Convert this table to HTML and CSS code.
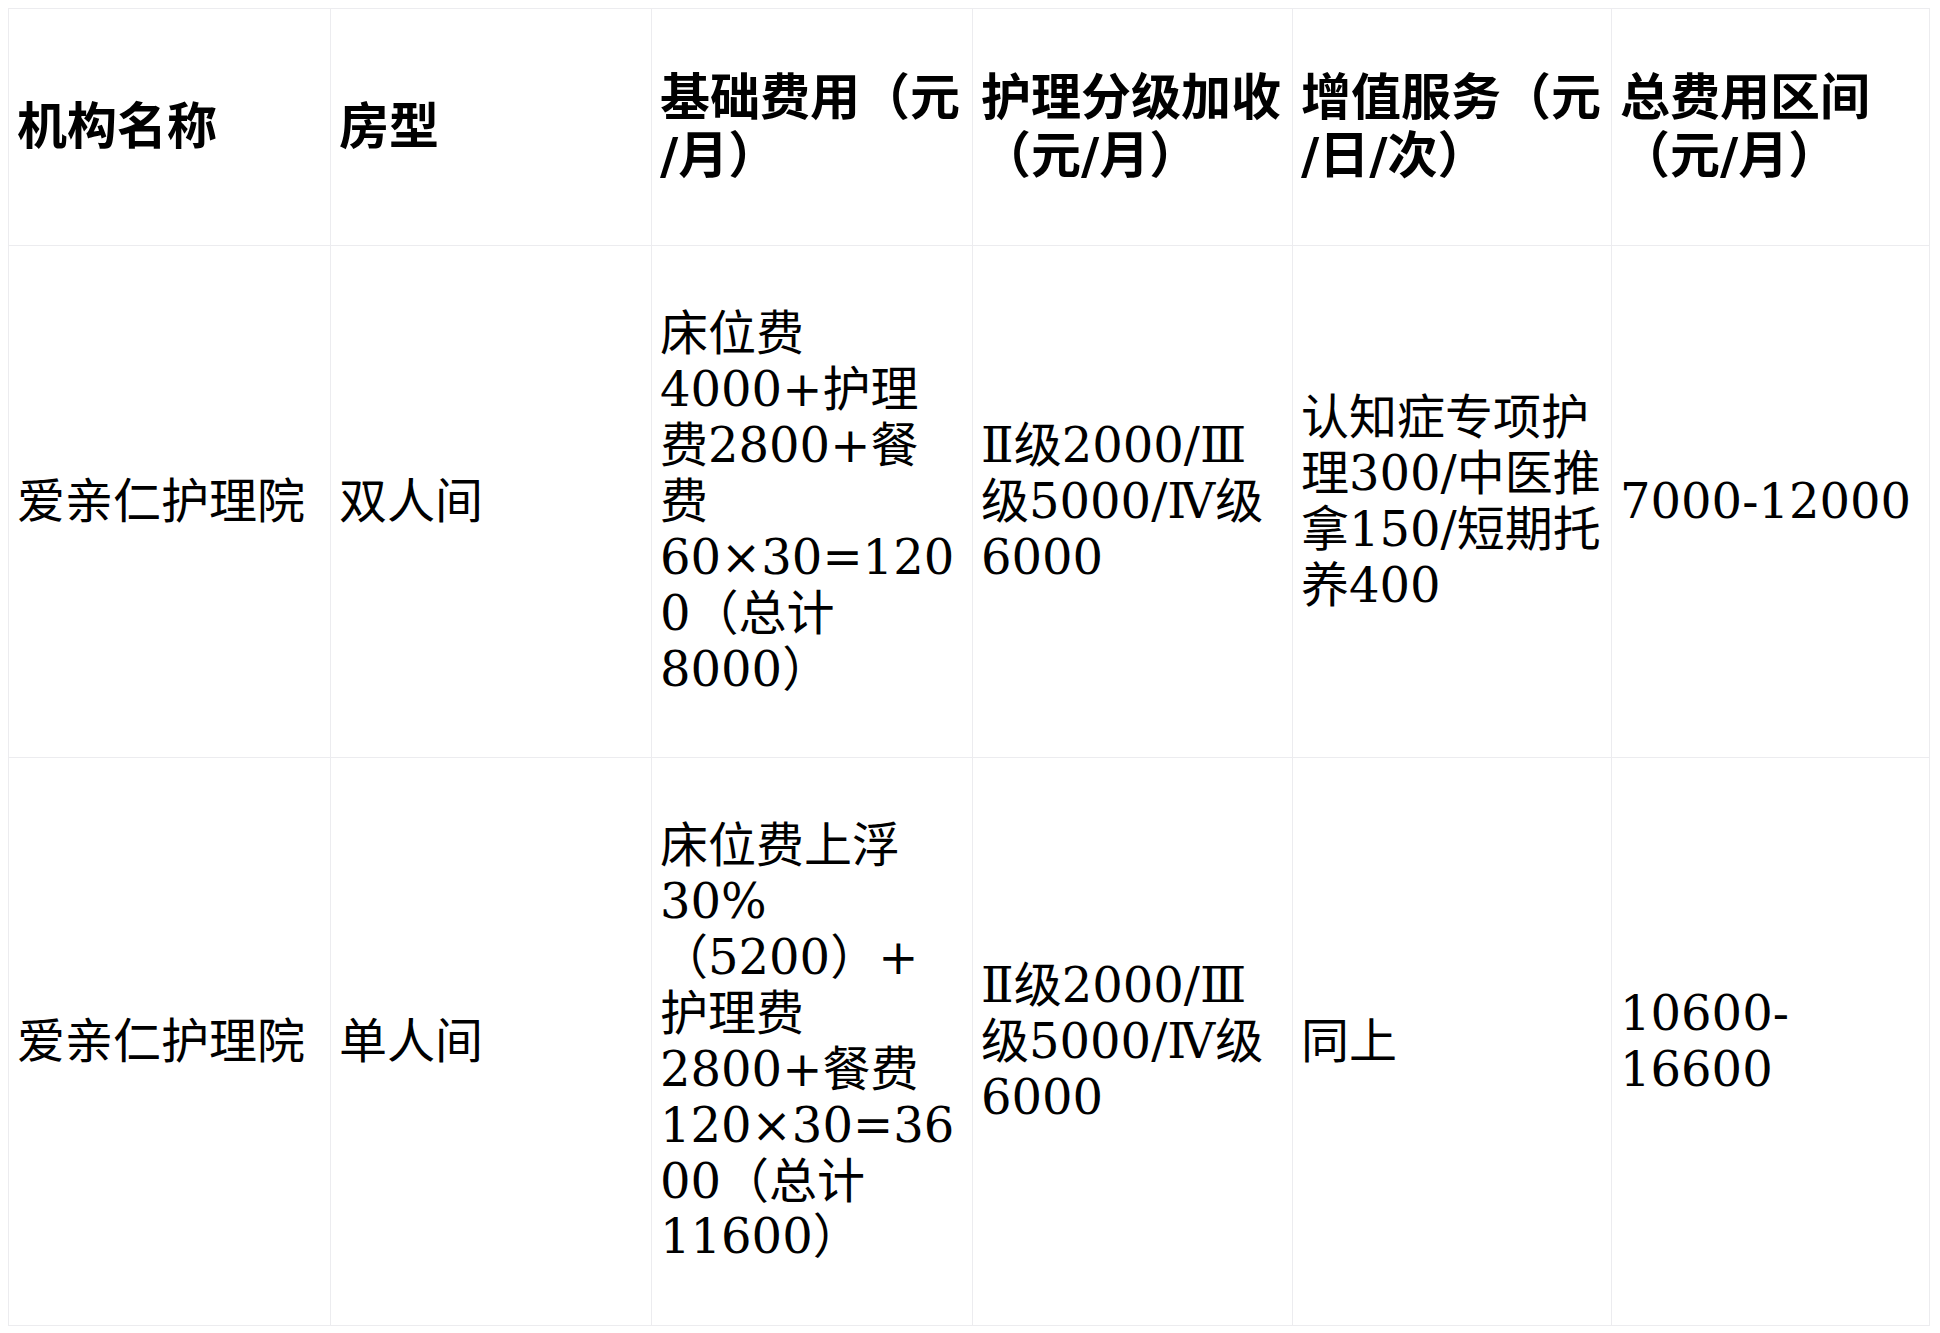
FILE: index.html
```html
<!DOCTYPE html>
<html lang="zh-CN">
<head>
<meta charset="utf-8">
<title>费用对比</title>
<link rel="stylesheet" href="styles.css">
</head>
<body>
<table class="fee-table">
  <colgroup>
    <col class="c1"><col class="c2"><col class="c3"><col class="c4"><col class="c5"><col class="c6">
  </colgroup>
  <thead>
    <tr>
      <th>机构名称</th>
      <th>房型</th>
      <th>基础费用（元<wbr>/月）</th>
      <th>护理分级加收（元<wbr>/月）</th>
      <th>增值服务（元<wbr>/日/次）</th>
      <th>总费用区间（元<wbr>/月）</th>
    </tr>
  </thead>
  <tbody>
    <tr>
      <td>爱亲仁护理院</td>
      <td>双人间</td>
      <td>床位费4000+护理费2800+餐费60×30=1200（总计8000）</td>
      <td>Ⅱ级2000/Ⅲ级5000/Ⅳ级6000</td>
      <td>认知症专项护理300/中医推拿150/短期托养400</td>
      <td>7000-12000</td>
    </tr>
    <tr>
      <td>爱亲仁护理院</td>
      <td>单人间</td>
      <td>床位费上浮30%<wbr>（5200）+<wbr>护理费2800+餐费120×30=3600（总计11600）</td>
      <td>Ⅱ级2000/Ⅲ级5000/Ⅳ级6000</td>
      <td>同上</td>
      <td>10600-16600</td>
    </tr>
  </tbody>
</table>
</body>
</html>
```
FILE: styles.css
```css
html, body {
  background: #ffffff;
}
body {
  margin: 8px;
  color: #000000;
  font-family: "DejaVu Serif", "Noto Sans CJK SC", serif;
}
.fee-table {
  border-collapse: collapse;
  table-layout: fixed;
  width: 1921px;
  border: 1px solid #e2e3e9;
  text-spacing-trim: space-all;
}
.c1 { width: 322px; }
.c2 { width: 321px; }
.c3 { width: 321px; }
.c4 { width: 320px; }
.c5 { width: 319px; }
.c6 { width: 318px; }
.fee-table th,
.fee-table td {
  border: 1px solid #ececef;
  padding: 60px 8px;
  text-align: left;
  vertical-align: middle;
  overflow-wrap: break-word;
  text-spacing-trim: space-all;
}
.fee-table th {
  font-family: "DejaVu Sans", "Noto Sans CJK SC", sans-serif;
  font-weight: 700;
  font-size: 50px;
  line-height: 1.164;
}
.fee-table thead tr {
  border-bottom: 1px solid #e2e3ec;
}
.fee-table td {
  font-size: 48px;
  line-height: 1.164;
  font-weight: 400;
}
.fee-table tbody tr + tr {
  border-top: 1px solid #ececef;
}
```
